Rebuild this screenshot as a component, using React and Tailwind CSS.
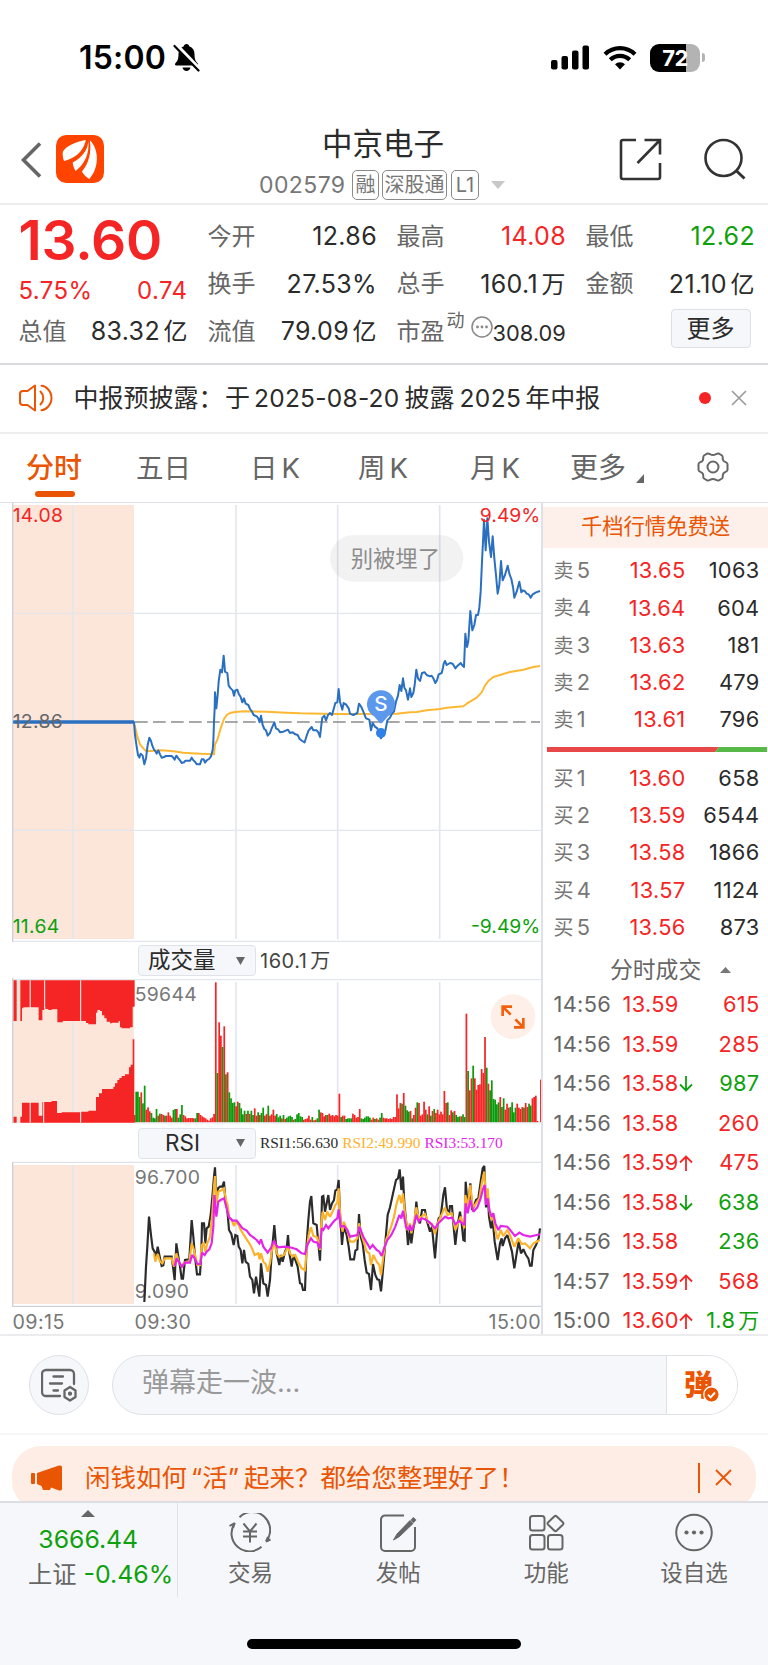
import React from 'react';

const PRICE =
  '40,681 402,681 405,720 410,755 414,780 418,788 422,776 428,782 433,808 438,790 443,750 448,728 453,738 457,752 462,764 466,768 470,776 475,766 480,778 485,788 492,786 498,783 515,783 520,788 524,794 529,782 535,790 540,796 545,804 552,802 556,797 570,797 575,788 580,796 585,800 590,808 600,808 605,793 611,793 615,803 620,796 627,792 633,784 638,765 640,740 642,680 644,640 645,592 649,640 653,600 656,560 661,524 666,532 671,482 675,530 682,534 686,572 692,580 698,586 702,602 706,586 712,584 716,596 722,606 727,622 732,610 737,626 745,630 750,642 756,650 761,660 770,664 775,670 779,682 783,662 788,690 793,702 798,706 803,722 810,714 815,700 823,682 828,700 835,704 840,712 850,710 864,704 870,714 878,712 886,718 893,720 899,732 907,738 914,742 920,722 926,706 935,696 940,706 950,706 955,712 960,726 964,690 967,668 973,662 978,676 984,660 990,654 996,660 1000,646 1006,624 1012,622 1016,582 1020,620 1027,644 1031,624 1038,628 1046,640 1050,656 1060,660 1072,654 1077,626 1084,636 1090,650 1098,670 1108,674 1113,706 1118,684 1124,694 1132,700 1138,716 1143,730 1150,716 1156,708 1162,676 1170,668 1177,654 1182,650 1188,620 1194,602 1199,570 1204,588 1209,550 1213,578 1218,586 1224,614 1230,580 1234,606 1240,594 1244,570 1249,524 1254,550 1260,558 1266,534 1274,532 1280,540 1290,544 1295,542 1300,550 1306,564 1311,556 1316,538 1325,534 1329,518 1331,506 1335,498 1340,510 1350,504 1358,506 1366,520 1373,512 1382,504 1386,510 1392,516 1396,416 1401,456 1405,438 1411,348 1417,406 1423,390 1428,360 1434,360 1438,338 1442,290 1446,200 1450,120 1452,74 1457,166 1462,70 1467,140 1473,186 1478,124 1483,190 1488,240 1493,296 1498,270 1503,198 1508,256 1515,240 1523,212 1528,236 1534,252 1539,276 1543,308 1550,290 1558,260 1564,292 1568,286 1574,288 1580,296 1586,298 1592,308 1598,298 1608,292 1620,288';
const AVERAGE =
  '404,690 412,725 420,748 430,760 438,768 450,768 485,766 520,769 550,773 600,776 642,778 645,748 652,735 662,700 672,672 680,660 690,654 705,651 735,649 800,650 860,653 900,655 1000,657 1040,657 1190,656 1230,652 1250,651 1280,646 1320,642 1340,638 1390,634 1400,626 1415,617 1430,608 1445,592 1455,572 1465,558 1480,546 1500,540 1530,531 1570,524 1600,516 1620,513';

const VOLUME = `
g92 g92 g76 r90 g57 g110 r38 r45 r33 g28
g14 g12 g40 r20 g26 r25 r22 g20 r20 r30
r20 r14 g37 g40 r40 g14 g24 g52 r22 r18
r12 r13 r13 r13 r12 g12 g28 r28 r22 r18
r15 r12 r8 r5 r12 r15 r25 r420 g148 r300
r260 g226 r288 g144 r150 g90 g72 g58 g60 r48
r62 g58 g42 g24 g35 r25 g35 r25 g35 g22
r42 r20 g30 r22 g28 g44 r20 r25 g50 r20
r24 r38 r20 g25 g15 g20 r12 g22 r10 g14
g18 g20 g16 r8 g10 g24 g28 g18 g16 r8
r10 r12 r20 r8 g16 r6 r8 g12 g38 r30
r28 r18 r22 g22 r26 r20 r22 r18 r22 r20
r86 g16 r20 r20 g10 g12 g12 g12 r26 r22
r14 r16 r40 g12 g10 g14 g18 g18 g14 r8
r14 g10 r12 r8 g14 g28 r14 r12 r12 r10
r12 r10 r16 r16 r84 r42 r58 g56 r88 g50
g36 g32 r34 g12 r22 r44 g60 r58 r20 r24
r62 r38 g24 r48 g20 r34 g40 r28 r38 r24
r32 r24 r94 r58 g60 r22 r36 g30 r34 g22
g16 g18 r18 g24 g16 r326 g154 r96 r132 g170
r132 r98 r112 r114 r160 r148 r256 g164 r116 g96
g126 g70 g68 g54 g60 r76 g46 g72 r38 r56
r44 g46 g60 g30 g44 r56 r44 r40 r46 g44
r58 r46 g56 g50 r72 r76 r80 r4 r0 r128`
  .trim()
  .split(/\s+/);

const RSI1 =
  '433,546 438,440 442,380 447,290 453,345 458,385 464,396 468,412 473,380 480,415 485,438 490,436 494,410 515,410 519,440 524,480 529,370 535,410 540,440 545,476 549,476 555,420 568,418 575,300 580,350 585,410 591,463 600,463 604,400 606,310 612,310 616,370 620,325 626,320 632,285 638,220 642,170 645,142 649,240 654,205 660,200 667,200 672,185 676,240 682,270 687,330 694,342 701,375 706,345 712,348 716,380 722,390 727,430 732,390 737,425 745,432 750,470 757,480 762,520 768,470 778,530 783,430 790,490 798,495 803,530 810,480 815,400 823,315 830,400 838,435 843,405 848,425 855,395 860,385 864,345 868,400 875,440 880,405 888,425 893,440 900,490 905,492 909,510 915,510 920,370 925,300 930,245 934,228 940,310 950,315 955,370 960,422 964,320 966,230 970,228 975,275 985,225 990,270 996,250 1002,240 1006,212 1012,208 1016,180 1020,280 1026,375 1031,320 1040,345 1046,380 1051,418 1062,418 1066,392 1072,388 1077,282 1082,350 1088,370 1094,420 1100,458 1107,462 1113,510 1119,432 1126,465 1132,478 1138,480 1143,514 1148,460 1155,380 1163,285 1170,262 1178,225 1188,180 1194,175 1199,148 1204,210 1209,170 1213,250 1219,310 1224,375 1230,325 1234,370 1240,325 1245,300 1249,245 1254,290 1260,310 1266,270 1275,270 1280,300 1290,335 1296,320 1305,415 1313,310 1316,295 1322,290 1330,225 1335,202 1341,270 1348,275 1350,258 1356,258 1360,310 1366,375 1372,320 1380,275 1385,310 1390,360 1394,362 1397,185 1402,245 1407,235 1411,190 1416,270 1422,260 1428,240 1435,235 1442,185 1448,145 1453,138 1458,262 1463,215 1467,290 1473,325 1478,300 1484,365 1493,420 1500,370 1505,355 1508,378 1515,355 1522,345 1528,365 1536,395 1543,445 1550,400 1556,365 1563,400 1570,388 1578,405 1585,415 1590,437 1595,437 1600,390 1608,375 1616,355 1620,325';
const RSI2 =
  '462,400 466,425 473,402 480,425 487,430 495,415 515,415 522,440 529,400 536,425 545,440 552,428 568,425 575,370 582,390 592,435 600,435 605,375 611,370 616,395 622,370 630,350 637,280 642,200 645,168 650,250 655,215 665,210 672,205 678,240 683,255 687,290 694,298 702,318 708,305 716,315 722,330 732,345 740,358 748,370 756,385 764,405 775,400 779,418 783,400 790,425 797,432 803,455 810,430 815,395 823,365 830,400 838,410 845,408 852,405 864,380 870,400 878,410 886,405 894,425 905,445 915,450 920,390 926,345 933,322 940,348 952,352 960,390 964,310 968,275 975,300 982,275 990,290 1000,270 1006,255 1012,248 1016,205 1022,310 1028,335 1031,305 1042,330 1050,365 1062,365 1072,355 1077,310 1085,345 1094,375 1100,395 1108,400 1113,435 1120,405 1130,425 1138,435 1143,465 1150,410 1158,360 1166,340 1175,315 1182,290 1190,250 1198,225 1204,250 1209,220 1215,280 1222,330 1230,310 1234,340 1242,305 1249,262 1256,295 1265,290 1275,282 1285,308 1296,312 1305,342 1313,310 1322,290 1335,262 1342,285 1355,280 1366,330 1374,310 1382,290 1393,325 1396,225 1403,260 1411,195 1418,265 1428,250 1438,235 1446,185 1453,155 1458,250 1463,205 1468,270 1475,300 1480,290 1486,330 1493,358 1502,330 1510,348 1522,330 1530,345 1543,380 1555,355 1565,372 1575,370 1590,385 1600,370 1610,365 1620,360';
const RSI3 =
  '524,438 530,415 538,428 546,440 555,428 570,428 576,405 584,415 592,432 601,432 606,398 614,405 620,395 628,388 635,370 640,320 643,225 649,290 655,245 662,240 672,235 678,258 687,292 698,302 710,302 722,318 728,325 740,332 750,345 760,352 770,360 778,370 783,358 790,380 803,398 812,385 822,362 828,375 835,382 855,380 870,382 890,388 905,400 915,402 922,375 933,355 940,365 952,368 960,385 965,325 970,330 978,315 985,325 995,312 1005,300 1012,295 1016,268 1022,320 1032,318 1042,330 1050,350 1072,345 1078,320 1090,350 1100,368 1110,385 1118,375 1130,390 1138,395 1145,408 1152,385 1162,360 1174,345 1186,320 1198,285 1204,295 1209,272 1218,320 1226,330 1230,315 1234,332 1242,315 1249,285 1256,305 1265,295 1275,298 1290,308 1305,325 1315,310 1335,290 1345,295 1356,293 1366,313 1378,303 1393,315 1397,250 1403,280 1411,240 1420,275 1432,262 1442,235 1448,210 1454,195 1458,255 1463,235 1468,270 1475,290 1480,280 1486,310 1495,330 1502,318 1522,320 1532,332 1545,348 1558,338 1570,345 1590,350 1610,345 1620,343';

const STATS = [
  [
    ['今开', '12.86', '', 'text-[#2b2b2b]'],
    ['换手', '27.53%', '', 'text-[#2b2b2b]'],
    ['流值', '79.09', '亿', 'text-[#2b2b2b]'],
  ],
  [
    ['最高', '14.08', '', 'text-[#f52525]'],
    ['总手', '160.1', '万', 'text-[#2b2b2b]'],
  ],
  [
    ['最低', '12.62', '', 'text-[#0ea10e]'],
    ['金额', '21.10', '亿', 'text-[#2b2b2b]'],
  ],
];

const SELLS = [
  ['卖', 5, '13.65', '1063'],
  ['卖', 4, '13.64', '604'],
  ['卖', 3, '13.63', '181'],
  ['卖', 2, '13.62', '479'],
  ['卖', 1, '13.61', '796'],
];
const BUYS = [
  ['买', 1, '13.60', '658'],
  ['买', 2, '13.59', '6544'],
  ['买', 3, '13.58', '1866'],
  ['买', 4, '13.57', '1124'],
  ['买', 5, '13.56', '873'],
];
const TRADES = [
  ['14:56', '13.59', '', '615', '', 'r'],
  ['14:56', '13.59', '', '285', '', 'r'],
  ['14:56', '13.58', 'down', '987', '', 'g'],
  ['14:56', '13.58', '', '260', '', 'r'],
  ['14:56', '13.59', 'up', '475', '', 'r'],
  ['14:56', '13.58', 'down', '638', '', 'g'],
  ['14:56', '13.58', '', '236', '', 'g'],
  ['14:57', '13.59', 'up', '568', '', 'r'],
  ['15:00', '13.60', 'up', '1.8', '万', 'g'],
];

function StatusBar() {
  return (
    <div className="flex h-[114px] items-center pl-[79px] pr-[63px] pt-px text-black">
      <span className="text-[32px] font-semibold leading-none tracking-[0.2px]">15:00</span>
      <svg className="ml-[7px]" width="27" height="29" viewBox="0 0 27 29">
        <path d="M13.5 1c1.6 0 2.6 1 2.7 2.3 3.600 1.100 5.300 4.200 5.300 7.700 0 5.700 1.300 7.300 3.100 9.300.9 1 .4 2.200-.9 2.200H3.300c-1.300 0-1.800-1.200-.9-2.200C4.200 18.300 5.500 16.700 5.500 11c0-3.500 1.700-6.600 5.300-7.700C10.900 2 11.900 1 13.500 1z" fill="#000" />
        <path d="M9.500 24.500h8c-.5 2.300-2 3.500-4 3.500s-3.500-1.200-4-3.500z" fill="#000" />
        <path d="M2.500 1.500 26 26" stroke="#fff" strokeWidth="4.500" />
        <path d="M1.500 3 25.500 27.500" stroke="#000" strokeWidth="2.200" strokeLinecap="round" />
      </svg>
      <div className="ml-auto flex items-center">
        <svg width="39" height="25" viewBox="0 0 39 25">
          <rect x="0" y="15" width="6.500" height="9.500" rx="2" />
          <rect x="10.500" y="11" width="6.500" height="13.500" rx="2" />
          <rect x="21" y="5.500" width="6.500" height="19" rx="2" />
          <rect x="31.500" y="0.500" width="6.500" height="24" rx="2" />
        </svg>
        <svg className="ml-[13px]" width="34" height="25" viewBox="0 0 34 25">
          <g fill="none" stroke="#000" strokeWidth="4.200">
            <path d="M2 9.200A21.500 21.500 0 0 1 32 9.200" />
            <path d="M7.300 14.800a13.800 13.800 0 0 1 19.400 0" />
          </g>
          <path d="M17 24.500l-5-5.200a7 7 0 0 1 10 0z" />
        </svg>
        <div className="ml-[13px] flex h-7 w-[50px] items-center justify-center rounded-[9px] bg-linear-to-r from-black from-72% to-[#b3b3b3] to-72%">
          <span className="text-[22px] font-bold leading-none tracking-[-0.5px] text-white">72</span>
        </div>
        <span className="ml-[2px] h-[9px] w-[3px] rounded-r-full bg-[#b3b3b3]" />
      </div>
    </div>
  );
}

function Tag({ children, w }) {
  return (
    <span className={`flex h-[30px] ${w} items-center justify-center rounded-[5px] border-[1.500px] border-[#8a8a8a] text-[20px] leading-none`}>
      {children}
    </span>
  );
}

function Header() {
  return (
    <header className="flex h-[91px] shrink-0 border-b-2 border-[#ececee] pl-[20px] pr-[22px]">
      <svg className="mt-[28px] shrink-0" width="22" height="36" viewBox="0 0 22 36">
        <path d="M20 1.500 3.500 18 20 34.500" fill="none" stroke="#666" strokeWidth="3.600" />
      </svg>
      <svg className="ml-[13.500px] mt-[21px] shrink-0" width="48" height="48" viewBox="0 0 49 48" preserveAspectRatio="none">
        <rect width="49" height="48" rx="10.500" fill="#ff4400" />
        <path d="M30.500 5C20 6.500 10 11.500 7 16.500c-.5 3 0 6.500 1.200 9.500C14 24.500 27 20.500 30.500 5z" fill="#fff" />
        <path d="M33 6c-.5 10-7.500 17-16 21.500.5 3.500 1.500 6.500 3 8.500C28 30 34.500 20 33 6z" fill="#fff" />
        <path d="M34.500 5c2 12-1 23.500-8 31.500 1.500 3 4.500 6 7.500 7.500C44 33 44.500 15 34.500 5z" fill="#fff" />
      </svg>
      <div className="ml-[155.500px] flex w-[250px] flex-col">
        <div className="mt-[14px] pl-[63px] text-[30.500px] leading-[32px] text-[#2b2b2b]">中京电子</div>
        <div className="mt-[10px] flex items-center text-[#777]">
          <span className="w-[93px] text-[23px] leading-none tracking-[0.4px]">002579</span>
          <Tag w="w-[27px]">融</Tag>
          <span className="w-[3px]" />
          <Tag w="w-[65px]">深股通</Tag>
          <span className="w-1" />
          <Tag w="w-[28px]">L1</Tag>
          <svg className="ml-3 shrink-0" width="14" height="8" viewBox="0 0 14 8">
            <path d="M0 0h14L7 8z" fill="#c8c8c8" />
          </svg>
        </div>
      </div>
      <svg className="ml-auto mt-[24px] shrink-0" width="43" height="43" viewBox="0 0 43 43" fill="none" stroke="#333" strokeWidth="2.600">
        <path d="M17 2H4a2 2 0 0 0-2 2v35a2 2 0 0 0 2 2h35a2 2 0 0 0 2-2V25" />
        <path d="M25.500 2H41v14.500M41 2 18.500 25" />
      </svg>
      <svg className="ml-[41px] mt-[24px] shrink-0" width="43" height="43" viewBox="0 0 43 43" fill="none" stroke="#333" strokeWidth="2.600">
        <circle cx="20.500" cy="20" r="18" />
        <path d="m33 32.500 8.500 8" strokeWidth="3" />
      </svg>
    </header>
  );
}

function Stat({ label, value, unit, color }) {
  return (
    <div className="flex h-[47.500px] items-center justify-between text-[24px] leading-none">
      <span className="text-[#666]">{label}</span>
      <span className={`flex items-baseline ${color}`}>
        <span className="-mr-[0.500px] text-[25px] tracking-[0.35px]">{value}</span>
        {unit && <span className="ml-[4px]">{unit}</span>}
      </span>
    </div>
  );
}

function Quote() {
  return (
    <section className="flex h-[160px] shrink-0 gap-5 border-b-2 border-[#d8dae0] pl-[18.500px] pt-[8px]">
      <div className="flex w-[169px] flex-col">
        <div className="flex h-[54px] items-center text-[55px] font-semibold leading-none tracking-[-0.2px] text-[#f52525]">13.60</div>
        <div className="flex h-[41px] items-center justify-between pt-[7px] text-[24px] leading-none tracking-[0.4px] text-[#f52525]">
          <span>5.75%</span>
          <span>0.74</span>
        </div>
        <Stat label="总值" value="83.32" unit="亿" color="text-[#2b2b2b]" />
      </div>
      <div className="w-[169px]">
        {STATS[0].map(([l, v, u, c]) => (
          <Stat key={l} label={l} value={v} unit={u} color={c} />
        ))}
      </div>
      <div className="w-[169px]">
        {STATS[1].map(([l, v, u, c]) => (
          <Stat key={l} label={l} value={v} unit={u} color={c} />
        ))}
        <div className="flex h-[47.500px] items-center whitespace-nowrap leading-none text-[#666]">
          <span className="shrink-0 text-[24px]">市盈</span>
          <span className="-mt-[22px] ml-[2px] shrink-0 text-[18px]">动</span>
          <svg className="-mt-[10px] ml-[6px] shrink-0" width="22" height="22" viewBox="0 0 22 22">
            <circle cx="11" cy="11" r="10" fill="none" stroke="#888" strokeWidth="1.500" />
            <g fill="#888">
              <circle cx="6.500" cy="11" r="1.400" />
              <circle cx="11" cy="11" r="1.400" />
              <circle cx="15.500" cy="11" r="1.400" />
            </g>
          </svg>
          <span className="flex flex-1 justify-end pt-[4px] text-[21.800px] text-[#2b2b2b]">308.09</span>
        </div>
      </div>
      <div className="flex w-[169px] flex-col">
        {STATS[2].map(([l, v, u, c]) => (
          <Stat key={l} label={l} value={v} unit={u} color={c} />
        ))}
        <button className="mr-1 mt-px flex h-[39px] w-[80px] items-center justify-center self-end rounded-[4px] border-[1.500px] border-[#dcdfe6] bg-[#f6f7fa] text-[24px] leading-none text-[#2b2b2b]">
          更多
        </button>
      </div>
    </section>
  );
}

function Notice() {
  return (
    <section className="flex h-[69px] shrink-0 items-center border-b-2 border-[#eeeef0] pb-px pl-[19px] pr-[21px]">
      <svg width="34" height="28" viewBox="0 0 34 28" fill="none" stroke="#ea5504" strokeWidth="2" strokeLinejoin="round" strokeLinecap="round">
        <path d="M16 1.500v25L8.500 21H4a3 3 0 0 1-3-3v-8a3 3 0 0 1 3-3h4.500z" />
        <path d="M21.500 7.500a9 9 0 0 1 0 13M22.500 1.800c4 0 10 5 10 12.200s-6 12.200-10 12.200" />
      </svg>
      <span className="ml-[20.500px] whitespace-nowrap text-[25px] leading-none text-[#2b2b2b]">
        中报预披露：<span className="ml-[1.500px]">于</span>
        <span className="ml-[4px] text-[24.500px] tracking-[0.25px]">2025-08-20</span>
        <span className="ml-[5px]">披露</span>
        <span className="ml-[5px] text-[24.500px] tracking-[0.4px]">2025</span>
        <span className="ml-[4px]">年中报</span>
      </span>
      <span className="ml-auto h-3 w-3 rounded-full bg-[#f52525]" />
      <svg className="ml-[20px]" width="16" height="16" viewBox="0 0 16 16">
        <path d="M1 1l14 14M15 1 1 15" stroke="#999" strokeWidth="1.600" />
      </svg>
    </section>
  );
}

function Tabs() {
  return (
    <nav className="flex h-[69px] shrink-0 border-b border-[#dfe0e6] pl-[26px] pt-[18px] text-[27.500px] leading-[32px] text-[#666]">
      <div className="flex w-[110px] flex-col text-[#ea5504]">
        <span className="text-[28px] font-medium">分时</span>
        <span className="ml-[9px] mt-[6.500px] h-[6px] w-[40px] shrink-0 rounded-[3px] bg-[#ea5504]" />
      </div>
      <span className="w-[114px]">五日</span>
      <span className="w-[108px]">日<span className="ml-1">K</span></span>
      <span className="w-[112px]">周<span className="ml-1">K</span></span>
      <span className="w-[100px]">月<span className="ml-1">K</span></span>
      <span className="w-[66px] text-[28px]">更多</span>
      <svg className="mt-[22px]" width="8" height="9" viewBox="0 0 8 9">
        <path d="M8 0v9H0z" fill="#666" />
      </svg>
      <svg className="ml-[53px]" width="32" height="30" viewBox="0 0 32 30" fill="none" stroke="#666" strokeWidth="2">
        <path d="M10.500 1.500c1.500-.6 3 1.500 5.500 1.500s4-2.100 5.500-1.500l3.500 2c1.500 1 0 3 1.300 5s4 1.500 4.200 3.500v6c-.2 2-3 1.500-4.200 3.500s.2 4-1.300 5l-3.500 2c-1.500.6-3-1.500-5.500-1.500s-4 2.100-5.500 1.500l-3.500-2c-1.500-1 0-3-1.300-5s-4-1.500-4.200-3.500v-6c.2-2 3-1.500 4.200-3.500s-.2-4 1.300-5z" />
        <circle cx="16" cy="15" r="5.500" />
      </svg>
    </nav>
  );
}

const FONT = "Inter, 'Noto Sans CJK SC', sans-serif";

function PriceChart() {
  return (
    <svg className="block max-w-none" width="542" height="439" viewBox="0 24 1626 1317" fontFamily={FONT}>
      <rect x="38" y="30" width="364" height="1302" fill="#fce5d9" />
      <g stroke="#e3e6ec" strokeWidth="5">
        <path d="M219 30V1332M708 30V1332M1013 30V1332M1319 30V1332" />
        <path d="M38 355H1626M38 1006H1626" strokeWidth="4" />
        <path d="M38 1339H1626" strokeWidth="4" />
      </g>
      <path d="M38 24V1341" stroke="#cdd1da" strokeWidth="4" />
      <path d="M405 681H1620" stroke="#8c8c8c" strokeWidth="5" strokeDasharray="38 16" />
      <polyline points={AVERAGE} fill="none" stroke="#fdb833" strokeWidth="6" strokeLinejoin="round" />
      <polyline points={PRICE} fill="none" stroke="#2a6fc0" strokeWidth="6" strokeLinejoin="round" />
      <path d="M40 681H402" stroke="#2a6fc0" strokeWidth="10" />
      <g fontSize="58" letterSpacing="1">
        <text x="38" y="82" fill="#f52525">14.08</text>
        <text x="38" y="698" fill="#666">12.86</text>
        <text x="38" y="1315" fill="#0ea10e">11.64</text>
      </g>
      <g fontSize="58" textAnchor="end">
        <text x="1621" y="82" fill="#f52525">9.49%</text>
        <text x="1621" y="1315" fill="#0ea10e">-9.49%</text>
      </g>
      <path d="M1143 688 1122 664a42 42 0 1 1 42 0z" fill="#5b97ea" />
      <path d="M1143 684V702" stroke="#fff" strokeWidth="4" />
      <circle cx="1143" cy="714" r="15" fill="#2f80e8" />
      <text x="1143" y="649" textAnchor="middle" fontSize="62" fontWeight="500" fill="#fff">S</text>
      <rect x="990" y="120" width="400" height="140" rx="70" fill="#000" fillOpacity="0.050" />
      <text x="1186" y="215" textAnchor="middle" fontSize="67" fill="#8c8c8c">别被埋了</text>
    </svg>
  );
}

function VolumeChart() {
  return (
    <svg className="block max-w-none" width="542" height="146" viewBox="0 114 1626 438" fontFamily={FONT}>
      <path d="M38 119H1626" stroke="#e3e6ec" strokeWidth="4" />
      <rect x="38" y="121" width="364" height="427" fill="#fce5d9" />
      <path d="M219 126V548M708 126V548M1013 126V548M1319 126V548" stroke="#e3e6ec" strokeWidth="5" />
      <g fill="#f52525">
        <path d="M40 121H50V243H40zM61 121H404V200H398V262H390V265H365V262H360V243H356V248H335V250H330V245H320V235H313V226H306V213H300V210H292V218H288V253H265V249H258V243H188V247H172V208H155V210H145V207H136V202H133V210H127V241H116V202H70V205H66V243H61z" />
        <path d="M40 530H50V548H40zM61 530H66V488H116V527H127V486H155V483H171V519H185V517H240V515H265V512H288V471H297V460H306V447H340V440H345V430H352V420H358V414H365V408H375V403H387V382H392V374H398V298H403V525H407V548H61z" />
      </g>
      <path d="M90.500 121V203M90.500 486V548M134 121V205M131 486V548M242 121V243M242 513V548" stroke="#fff" strokeWidth="3" />
      <path d="M38 114V550" stroke="#cdd1da" strokeWidth="4" />
      {VOLUME.map((bar, i) => {
        const h = Number(bar.slice(1));
        return <rect key={i} x={406 + 5.08 * i} y={547 - h} width="5.200" height={h} fill={bar[0] === 'r' ? '#f52525' : '#0a9b0a'} />;
      })}
      <path d="M404 549H1626" stroke="#e3e6ec" strokeWidth="3" />
      <text x="404" y="183" fontSize="58" letterSpacing="1" fill="#777">59644</text>
      <circle cx="1539" cy="230" r="67" fill="#fef0e9" />
      <path d="M1508 228V200H1536M1509 201 1532 224M1570 234V262H1542M1569 261 1546 238" fill="none" stroke="#f2600c" strokeWidth="8" />
    </svg>
  );
}

function RsiChart() {
  return (
    <svg className="block max-w-none" width="542" height="147" viewBox="0 123 1626 441" fontFamily={FONT}>
      <rect x="38" y="135" width="364" height="417" fill="#fce5d9" />
      <path d="M219 135V552M708 135V552M1013 135V552M1319 135V552" stroke="#e3e6ec" strokeWidth="5" />
      <path d="M38 127H1626" stroke="#dfe1e7" strokeWidth="4" />
      <path d="M38 559H1626" stroke="#cdd1da" strokeWidth="4" />
      <path d="M38 126V561" stroke="#cdd1da" strokeWidth="4" />
      <g fontSize="58" letterSpacing="1" fill="#777">
        <text x="404" y="191">96.700</text>
        <text x="404" y="533">9.090</text>
      </g>
      <g fill="none" strokeWidth="6.500" strokeLinejoin="miter" strokeMiterlimit="2">
        <polyline points={RSI1} stroke="#2b2b2b" />
        <polyline points={RSI2} stroke="#fdb22b" />
        <polyline points={RSI3} stroke="#e425e8" />
      </g>
    </svg>
  );
}

function Picker({ children, pad }) {
  return (
    <div className={`ml-[138px] flex h-[31px] w-[118px] shrink-0 items-center justify-between rounded-[4px] border border-[#dfe2e8] bg-[#f6f7fa] pr-[10px] ${pad} text-[22.500px] leading-none text-[#2b2b2b]`}>
      {children}
      <svg width="9" height="8" viewBox="0 0 9 8">
        <path d="M0 0h9L4.500 8z" fill="#666" />
      </svg>
    </div>
  );
}

function Charts() {
  return (
    <div className="w-[541px] shrink-0 overflow-hidden">
      <PriceChart />
      <div className="flex h-[36px] items-center pt-px">
        <Picker pad="pl-[9px]">成交量</Picker>
        <span className="ml-[4px] text-[20px] leading-none tracking-[0.5px] text-[#444]">
          160.1<span className="ml-[3px]">万</span>
        </span>
      </div>
      <VolumeChart />
      <div className="flex h-[37px] items-center pt-px">
        <Picker pad="pl-[26px]">RSI</Picker>
        <div className="ml-[4px] flex gap-[4px] whitespace-nowrap font-['Liberation_Serif',serif] text-[15.400px] leading-none">
          <span className="text-[#2b2b2b]">RSI1:56.630</span>
          <span className="text-[#fdb22b]">RSI2:49.990</span>
          <span className="text-[#e425e8]">RSI3:53.170</span>
        </div>
      </div>
      <RsiChart />
      <div className="flex h-[28px] items-center pl-[12.500px] text-[19.700px] leading-none tracking-[0.4px] text-[#777]">
        <span className="w-[122px] pt-[1px]">09:15</span>
        <span className="pt-[1px]">09:30</span>
        <span className="ml-auto pt-[1px]">15:00</span>
      </div>
    </div>
  );
}

function Level({ row }) {
  return (
    <div className="flex h-[37.300px] items-center pl-[10.500px] pr-[8.500px] text-[21.800px] leading-none tracking-[0.3px]">
      <span className="flex w-[42px] shrink-0 items-center text-[#777]">
        <span className="text-[20px]">{row[0]}</span>
        <span className="ml-[3px]">{row[1]}</span>
      </span>
      <span className="w-[90px] text-right text-[#f52525]">{row[2]}</span>
      <span className="ml-auto text-[#2b2b2b]">{row[3]}</span>
    </div>
  );
}

function Arrow({ dir }) {
  return (
    <svg width="14" height="16" viewBox="0 0 14 16" fill="none" strokeWidth="1.800" stroke={dir === 'up' ? '#f52525' : '#0ea10e'}>
      {dir === 'up' ? <path d="M7 16V1.500M1 7.500l6-6 6 6" /> : <path d="M7 0v14.500M1 8.500l6 6 6-6" />}
    </svg>
  );
}

function OrderBook() {
  return (
    <div className="flex-1 overflow-hidden border-l-2 border-[#dfe0e8]">
      <div className="mt-[4px] flex h-[41px] items-center justify-center bg-[#fdf0ea] pb-px text-[21.300px] leading-none text-[#ea5504]">千档行情免费送</div>
      <div className="mt-[4.500px]">
        {SELLS.map((r) => (
          <Level key={r[1]} row={r} />
        ))}
      </div>
      <svg className="ml-[4px] mt-[8.500px] block" width="220" height="5" viewBox="0 0 220 5">
        <path d="M0 0H172L168 5H0z" fill="#e94848" />
        <path d="M172 0H220V5H168z" fill="#57b947" />
      </svg>
      <div className="mt-[7.500px]">
        {BUYS.map((r) => (
          <Level key={r[1]} row={r} />
        ))}
      </div>
      <div className="flex h-[39px] items-center pl-[67px] pt-[9px] text-[22.800px] leading-none text-[#666]">
        分时成交
        <svg className="ml-[19px]" width="11" height="6" viewBox="0 0 11 6">
          <path d="M0 6h11L5.500 0z" fill="#777" />
        </svg>
      </div>
      {TRADES.map((t, i) => (
        <div key={i} className="flex h-[39.500px] items-center pl-[10.500px] pr-[8.500px] text-[21.800px] leading-none tracking-[0.3px]">
          <span className="w-[69px] text-[#666]">{t[0]}</span>
          <span className="mr-px w-[55.500px] text-[#f52525]">{t[1]}</span>
          {t[2] && <Arrow dir={t[2]} />}
          <span className={`ml-auto flex items-baseline ${t[5] === 'r' ? 'text-[#f52525]' : 'text-[#0ea10e]'}`}>
            {t[3]}
            {t[4] && <span className="ml-[3px] text-[21px]">{t[4]}</span>}
          </span>
        </div>
      ))}
    </div>
  );
}

function CommentBar() {
  return (
    <section className="flex h-[99px] shrink-0 items-start border-b-2 border-[#f6f6f6] pl-[29px] pt-[19px]">
      <div className="flex h-[60px] w-[60px] items-center justify-center rounded-full border-[1.500px] border-[#dfe1e7] bg-[#f6f7fa]">
        <svg width="36" height="34" viewBox="0 0 36 34" fill="none" stroke="#666" strokeWidth="2.300" strokeLinecap="round">
          <path d="M19 28H5a4 4 0 0 1-4-4V6a4 4 0 0 1 4-4h24a4 4 0 0 1 4 4v10" />
          <path d="M12.500 8.500h9.500M9 15.500h12M12.500 22.500h4.500" />
          <path d="m29 19 5.500 3.400v6.600L29 32.500 23.500 29v-6.600z" strokeLinejoin="round" />
          <circle cx="29" cy="25.700" r="1" />
        </svg>
      </div>
      <div className="ml-[23px] flex h-[60px] w-[626px] overflow-hidden rounded-full border-[1.500px] border-[#dfe1e7] bg-[#f6f7fa]">
        <span className="flex flex-1 items-center pb-[5px] pl-[29px] text-[27px] leading-none text-[#999]">弹幕走一波...</span>
        <div className="flex w-[71px] items-center border-l-[1.500px] border-[#dfe1e7] bg-white pl-[17px]">
          <div className="relative text-[29px] font-black leading-none text-[#ea5504]">
            弹
            <svg className="absolute -bottom-[3px] -right-[7px]" width="17" height="17" viewBox="0 0 17 17">
              <circle cx="8.500" cy="8.500" r="7.700" fill="#ea5504" stroke="#fff" strokeWidth="1.400" />
              <path d="m5 8.700 2.600 2.600L12 6.500" fill="none" stroke="#fff" strokeWidth="1.900" />
            </svg>
          </div>
        </div>
      </div>
    </section>
  );
}

function Promo() {
  return (
    <section className="h-[66px] shrink-0 overflow-hidden px-[12px] pt-[10.500px]">
      <div className="flex h-[64px] items-center rounded-[29px] bg-[#fdede5] pl-[19px] pr-[24.500px] text-[#ea5504]">
        <svg width="31" height="26" viewBox="0 0 31 26" fill="#ea5504">
          <rect x="0" y="8" width="4" height="11" rx="1" />
          <path d="M6 8 28 0.500Q31 0 31 2V24Q31 26 28 25.500L24 24 20 22.500 19 25H12L10.500 21 6 19z" />
        </svg>
        <span className="ml-[23px] flex whitespace-nowrap text-[25.500px] leading-none">
          闲钱如何<span className="ml-[4px]">“</span>活<span className="mr-[5px]">”</span>起来？都给您整理好了！
        </span>
        <span className="ml-auto h-[30px] w-[1.500px] bg-[#ea5504]" />
        <svg className="ml-[15px]" width="17" height="17" viewBox="0 0 17 17">
          <path d="M1 1l15 15M16 1 1 16" stroke="#ea5504" strokeWidth="1.800" />
        </svg>
      </div>
    </section>
  );
}

function NavItem({ label, children }) {
  return (
    <div className="flex flex-1 flex-col items-center pt-[10px] text-[22.500px] leading-none text-[#666]">
      <svg width="42" height="39" viewBox="0 0 42 39" fill="none" stroke="#666" strokeWidth="2">
        {children}
      </svg>
      <span className="mt-[10px]">{label}</span>
    </div>
  );
}

function BottomBar() {
  return (
    <footer className="flex flex-1 flex-col border-t-2 border-[#dcdee4] bg-[#f6f7fa]">
      <div className="flex h-[94px]">
        <div className="flex w-[177.500px] flex-col items-center border-r-[1.500px] border-[#dfe1e7] pt-[7px]">
          <svg width="14" height="7" viewBox="0 0 14 7">
            <path d="M0 7h14L7 0z" fill="#666" />
          </svg>
          <span className="mt-[10px] text-[24.800px] leading-none text-[#0ea10e]">3666.44</span>
          <div className="mt-[10px] flex w-full items-center whitespace-nowrap pl-[28px] text-[24.300px] leading-none text-[#666]">
            上证<span className="ml-[7px] text-[24.900px] text-[#0ea10e]">-0.46%</span>
          </div>
        </div>
        <div className="-ml-[1px] flex flex-1">
          <NavItem label="交易">
            <path d="M10.500 4.200A18 18 0 0 1 37 28.500L41.500 26.500M37 28.500 39 24M32.500 33.800A18 18 0 0 1 5.800 10L0.500 13M5.800 10 4 15" />
            <path d="m14.500 10.500 6.500 8 6.500-8M21 18.500v11M14 18.500h14M14 23.500h14" />
          </NavItem>
          <NavItem label="发帖">
            <path d="M27 2.500H8a4 4 0 0 0-4 4V34a4 4 0 0 0 4 4h26a4 4 0 0 0 4-4V14" />
            <path d="M33 7.500 20 21l-3.500 6 6-3.500 13.500-13z" fill="#666" strokeWidth="1" />
            <path d="m35 5.500 3 3" strokeWidth="4" />
          </NavItem>
          <NavItem label="功能">
            <rect x="5" y="3" width="14.500" height="14.500" rx="2.500" />
            <rect x="5" y="22" width="14.500" height="14.500" rx="2.500" />
            <rect x="23" y="22" width="14.500" height="14.500" rx="2.500" />
            <path d="M29.200 3.500q1.300-1.300 2.600 0l6 5.700q1.300 1.300 0 2.600l-6 5.700q-1.300 1.300-2.600 0l-6-5.700q-1.300-1.300 0-2.600z" />
          </NavItem>
          <NavItem label="设自选">
            <circle cx="21" cy="19.500" r="17.800" />
            <g fill="#666" stroke="none">
              <circle cx="13.500" cy="19.500" r="2.100" />
              <circle cx="21" cy="19.500" r="2.100" />
              <circle cx="28.500" cy="19.500" r="2.100" />
            </g>
          </NavItem>
        </div>
      </div>
      <div className="mb-4 mt-auto h-[10px] w-[274px] self-center rounded-full bg-black" />
    </footer>
  );
}

export default function App() {
  return (
    <div className="flex h-[1665px] w-[768px] flex-col overflow-hidden bg-white font-[Inter,'Noto_Sans_CJK_SC',sans-serif]">
      <StatusBar />
      <Header />
      <Quote />
      <Notice />
      <Tabs />
      <main className="flex h-[833px] shrink-0 border-b-2 border-[#ececef]">
        <Charts />
        <OrderBook />
      </main>
      <CommentBar />
      <Promo />
      <BottomBar />
    </div>
  );
}
